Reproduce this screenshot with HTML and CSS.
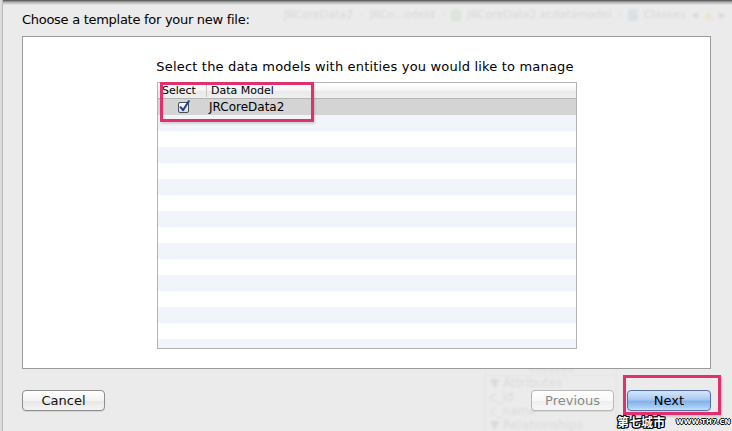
FILE: index.html
```html
<!DOCTYPE html>
<html>
<head>
<meta charset="utf-8">
<link rel="stylesheet" href="styles.css">
</head>
<body>
<div class="screen">
  <div class="backdrop-toolbar">
    <span class="bt-item bt-a">JRCoreData2</span>
    <span class="bt-sep">›</span>
    <span class="bt-item">JRCo...odeld</span>
    <span class="bt-sep">›</span>
    <span class="bt-icon green"></span>
    <span class="bt-item">JRCoreData2.xcdatamodel</span>
    <span class="bt-sep">›</span>
    <span class="bt-icon blue"></span>
    <span class="bt-item">Classes</span>
    <span class="bt-arrow">◀</span>
    <span class="bt-warn">▲</span>
    <span class="bt-arrow">▶</span>
  </div>
  <div class="backdrop-panel">
    <div class="bp-head">Classes</div>
    <div class="bp-row">▼ Attributes</div>
    <div class="bp-row">c_id</div>
    <div class="bp-row">c_name</div>
    <div class="bp-row">▼ Relationships</div>
  </div>
  <div class="top-shadow"></div>
  <div class="left-edge"></div>

  <div class="dialog">
    <div class="title">Choose a template for your new file:</div>
    <div class="panel">
      <div class="prompt">Select the data models with entities you would like to manage</div>
      <div class="table">
        <div class="thead">
          <div class="th th-select">Select</div>
          <div class="th th-model">Data Model</div>
        </div>
        <div class="tbody">
          <div class="row selected">
            <div class="cell cell-select">
              <svg class="check" width="14" height="14" viewBox="0 0 14 14">
                <defs>
                  <linearGradient id="cb" x1="0" y1="0" x2="0" y2="1">
                    <stop offset="0" stop-color="#ffffff"/>
                    <stop offset="1" stop-color="#d6dbe6"/>
                  </linearGradient>
                </defs>
                <rect x="1.5" y="2.5" width="10" height="10" rx="1.5" fill="url(#cb)" stroke="#4a4f5a" stroke-width="1"/>
                <path d="M3.6 7.2 L6 10.2 L11.8 1.2" fill="none" stroke="#1f3f86" stroke-width="2" stroke-linecap="round" stroke-linejoin="round"/>
              </svg>
            </div>
            <div class="cell cell-model">JRCoreData2</div>
          </div>
        </div>
      </div>
    </div>
    <div class="buttons">
      <button class="btn">Cancel</button>
      <div class="spacer"></div>
      <button class="btn disabled">Previous</button>
      <button class="btn primary">Next</button>
    </div>
  </div>

  <div class="mark mark-table"></div>
  <div class="mark mark-next"></div>
  <div class="watermark"><span class="wm-cn">第七城市</span><span class="wm-url">WWW.TH7.CN</span></div>
</div>
</body>
</html>
```
FILE: styles.css
```css
html, body {
  margin: 0;
  padding: 0;
}
body {
  width: 732px;
  height: 431px;
  overflow: hidden;
  background: #ececec;
  font-family: "Lucida Grande", "DejaVu Sans", sans-serif;
  color: #000;
}
.screen {
  position: relative;
  width: 732px;
  height: 431px;
  overflow: hidden;
  background: #ebebeb;
}

/* blurred window content behind the sheet */
.backdrop-toolbar {
  position: absolute;
  top: 8px;
  left: 284px;
  display: flex;
  align-items: center;
  gap: 6px;
  font-size: 11px;
  filter: blur(1.3px);
  white-space: nowrap;
  opacity: 0.5;
}
.bt-item { color: #c4c4c4; }
.bt-sep { color: #cfcfcf; }
.bt-icon {
  width: 10px;
  height: 12px;
  border-radius: 2px;
}
.bt-icon.green { background: #cfe0cb; }
.bt-icon.blue { background: #ccd4e4; }
.bt-arrow { color: #c8c8c8; font-size: 9px; }
.bt-warn { color: #ecd9a4; font-size: 11px; }

.backdrop-panel {
  position: absolute;
  left: 485px;
  top: 360px;
  width: 130px;
  height: 80px;
  border: 1px solid #e0e0e0;
  filter: blur(1px);
  font-size: 12px;
  color: #d6d6d6;
  opacity: 0.8;
}
.bp-head {
  text-align: center;
  height: 14px;
  line-height: 14px;
  border-bottom: 1px solid #e0e0e0;
}
.bp-row {
  padding-left: 4px;
  line-height: 14px;
}

.top-shadow {
  position: absolute;
  left: 0;
  top: 0;
  width: 732px;
  height: 5px;
  background: linear-gradient(#4a4a4a, rgba(90,90,90,0.45) 40%, rgba(235,235,235,0));
}
.left-edge {
  position: absolute;
  left: 0;
  top: 0;
  width: 2px;
  height: 431px;
  background: #dcdcdc;
  border-right: 1px solid #b9b9b9;
}

/* sheet */
.dialog {
  position: relative;
  display: flex;
  flex-direction: column;
  padding: 0 21px 0 22px;
}
.title {
  padding-top: 12px;
  height: 36px;
  box-sizing: border-box;
  font-size: 13px;
  line-height: 16px;
  letter-spacing: -0.28px;
}
.panel {
  height: 333px;
  box-sizing: border-box;
  border: 1px solid #9b9b9b;
  background: #fff;
  display: flex;
  flex-direction: column;
  align-items: center;
  padding-top: 22px;
}
.prompt {
  font-size: 13px;
  line-height: 16px;
  height: 23px;
  margin-right: 3px;
  letter-spacing: 0.18px;
}
.table {
  width: 420px;
  height: 267px;
  box-sizing: border-box;
  border: 1px solid #b3b3b3;
  display: flex;
  flex-direction: column;
  margin-left: 1px;
}
.thead {
  height: 16px;
  box-sizing: border-box;
  border-bottom: 1px solid #b3b3b3;
  background: linear-gradient(#ffffff, #f4f4f4 50%, #e9e9e9 51%, #efefef);
  display: flex;
  align-items: center;
  font-size: 11px;
}
.th-select {
  width: 44px;
  padding-left: 4px;
  border-right: 1px solid #c6c6c6;
  height: 13px;
  line-height: 13px;
}
.th-model {
  padding-left: 4px;
  line-height: 13px;
}
.tbody {
  flex: 1;
  background: repeating-linear-gradient(#ffffff 0 16px, #f1f5fa 16px 32px);
}
.row {
  height: 16px;
  display: flex;
  align-items: center;
}
.row.selected {
  background: #d4d4d4;
}
.cell-select {
  width: 49px;
  display: flex;
  justify-content: center;
  padding-left: 2px;
  box-sizing: border-box;
}
.check {
  display: block;
  margin-top: -1px;
}
.cell-model {
  padding-left: 2px;
  font-size: 12px;
  line-height: 16px;
}

.buttons {
  display: flex;
  align-items: center;
  margin-top: 21px;
  gap: 13px;
}
.spacer { flex: 1; }
.btn {
  width: 83px;
  height: 21px;
  box-sizing: border-box;
  border: 1px solid #8d8d8d;
  border-radius: 4px;
  background: linear-gradient(#ffffff, #f3f3f3 50%, #e6e6e6 51%, #f4f4f4);
  font-family: "Lucida Grande", "DejaVu Sans", sans-serif;
  font-size: 13px;
  color: #111;
  padding: 0;
  line-height: 18px;
  box-shadow: 0 1px 0 rgba(0,0,0,0.08);
}
.btn.disabled {
  color: #8a8a8a;
  border-color: #b6b6b6;
  background: linear-gradient(#ffffff, #f8f8f8 50%, #eeeeee 51%, #f7f7f7);
}
.btn.primary {
  width: 84px;
  border-color: #4f6fa6;
  background: linear-gradient(#d7e6fb, #a9c9f3 45%, #86b1ec 55%, #a6cdf5 85%, #c9e0fb);
  color: #000;
}

/* annotation overlays */
.mark {
  position: absolute;
  box-sizing: border-box;
  border: 3px solid #e1306e;
  box-shadow: 1px 2px 2px rgba(0,0,0,0.15);
}
.mark-table {
  left: 160px;
  top: 82px;
  width: 154px;
  height: 40px;
}
.mark-next {
  left: 623px;
  top: 375px;
  width: 98px;
  height: 40px;
}
.watermark {
  position: absolute;
  left: 617px;
  top: 414px;
  display: flex;
  align-items: center;
  gap: 11px;
  color: #fff;
  white-space: nowrap;
}
.wm-cn {
  font-family: "Noto Sans CJK SC", sans-serif;
  font-weight: 700;
  font-size: 12px;
  line-height: 16px;
  text-shadow: -1px 0 #000, 1px 0 #000, 0 -1px #000, 0 1px #000, 1px 1px #000, -1px -1px #000, 1px -1px #000, -1px 1px #000;
}
.wm-url {
  font-family: "DejaVu Sans", sans-serif;
  font-weight: 700;
  font-size: 7px;
  line-height: 10px;
  text-shadow: -1px 0 #000, 1px 0 #000, 0 -1px #000, 0 1px #000;
}
```
